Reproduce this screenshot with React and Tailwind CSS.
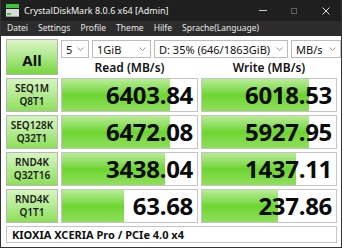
import React from 'react';

const rows = [
  { a: 'SEQ1M', b: 'Q8T1', read: '6403.84', rp: 80, write: '6018.53', wp: 80 },
  { a: 'SEQ128K', b: 'Q32T1', read: '6472.08', rp: 80, write: '5927.95', wp: 80 },
  { a: 'RND4K', b: 'Q32T16', read: '3438.04', rp: 76, write: '1437.11', wp: 70 },
  { a: 'RND4K', b: 'Q1T1', read: '63.68', rp: 46, write: '237.86', wp: 57 },
];

function Chevron() {
  return (
    <svg width="7" height="4" viewBox="0 0 7 4" className="shrink-0">
      <polyline points="0.5,0.5 3.5,3.5 6.5,0.5" fill="none" stroke="#9a9a9a" strokeWidth="1" />
    </svg>
  );
}

function Select({ w, children }) {
  return (
    <div className={`${w} h-[18px] flex items-center justify-between border border-[#bcbcbc] bg-white pl-[4px] pr-[4px] text-[11px] text-[#111] whitespace-nowrap`}>
      <span className="leading-none">{children}</span>
      <Chevron />
    </div>
  );
}

function Meter({ value, pct, w }) {
  return (
    <div className={`${w} relative h-[34px] border border-[#c4c4c4] bg-white overflow-hidden`}>
      <div
        className="absolute left-0 top-0 bottom-0 bg-linear-to-b from-[#b9ec95] via-[#6dd52f] to-[#8fdf5b]"
        style={{ width: `${pct}%` }}
      />
      <div className="relative h-full flex items-center justify-end pr-[4px] text-[24px] font-bold text-[#0a0a0a] leading-none tracking-[-0.3px]">
        {value}
      </div>
    </div>
  );
}

export default function App() {
  return (
    <div className="w-[343px] h-[250px] bg-white font-['Noto_Sans',sans-serif]">
      <div className="w-[342px] h-[248px] flex flex-col bg-white border-x border-b border-[#333]">
        {/* title bar */}
        <div className="h-[21px] bg-[#1f1f1f] flex items-center text-white shrink-0">
          <svg width="13" height="13" viewBox="0 0 13 13" className="ml-[5px] mr-[5px]">
            <rect x="0" y="0" width="13" height="4" fill="#3cc43c" />
            <rect x="0" y="5" width="13" height="8" fill="#d9d9d9" />
            <rect x="1" y="9" width="4" height="2" fill="#3cc43c" />
            <rect x="0" y="12" width="13" height="1" fill="#9a9a9a" />
          </svg>
          <span className="text-[9px] leading-none text-[#f2f2f2]">CrystalDiskMark 8.0.6 x64 [Admin]</span>
          <div className="ml-auto flex items-center mr-[11px]">
            <div className="w-[8px] h-[1px] bg-[#d0d0d0]" />
            <div className="w-[6px] h-[6px] border border-[#5e5e5e] ml-[24px]" />
            <svg width="8" height="8" viewBox="0 0 8 8" className="ml-[25px]">
              <path d="M0.5 0.5 L7.5 7.5 M7.5 0.5 L0.5 7.5" stroke="#e0e0e0" strokeWidth="1" />
            </svg>
          </div>
        </div>

        {/* menu bar */}
        <div className="h-[15px] bg-[#2c2c2c] flex items-center gap-[10px] pl-[6px] text-[8.5px] text-[#e8e8e8] leading-none shrink-0">
          <span>Datei</span>
          <span>Settings</span>
          <span>Profile</span>
          <span>Theme</span>
          <span>Hilfe</span>
          <span>Sprache(Language)</span>
        </div>

        {/* body */}
        <div className="flex flex-col gap-[3px] pl-[5px] pt-[3px]">
          <div className="flex gap-[3px]">
            <div className="w-[52px] h-[36px] border border-[#b4b4b4] bg-linear-to-b from-[#dcf6c8] to-[#76d636] flex items-center justify-center pt-[6px] text-[15px] font-bold text-[#111]">
              All
            </div>
            <div className="flex flex-col">
              <div className="flex gap-[3px] mt-[1px]">
                <Select w="w-[28px]">5</Select>
                <Select w="w-[59px]">1GiB</Select>
                <Select w="w-[134px]">D: 35% (646/1863GiB)</Select>
                <Select w="w-[50px]">MB/s</Select>
              </div>
              <div className="flex gap-[3px] mt-[4px] text-[12px] font-semibold text-[#111] leading-none">
                <div className="w-[137px] text-center">Read (MB/s)</div>
                <div className="w-[136px] text-center">Write (MB/s)</div>
              </div>
            </div>
          </div>

          {rows.map((r, i) => (
            <div key={i} className="flex gap-[3px]">
              <div className="w-[52px] h-[34px] border border-[#b8b8b8] bg-linear-to-b from-[#d6f5bf] to-[#8ddf58] flex flex-col items-center justify-center text-[10px] font-semibold text-[#1a1a1a] leading-[13px]">
                <span>{r.a}</span>
                <span>{r.b}</span>
              </div>
              <Meter value={r.read} pct={r.rp} w="w-[137px]" />
              <Meter value={r.write} pct={r.wp} w="w-[136px]" />
            </div>
          ))}

          <div className="w-[331px] h-[17px] border border-[#c4c4c4] bg-white flex items-center pl-[5px] text-[11px] font-bold text-[#111] leading-none">
            KIOXIA XCERIA Pro / PCIe 4.0 x4
          </div>
        </div>
      </div>
    </div>
  );
}
